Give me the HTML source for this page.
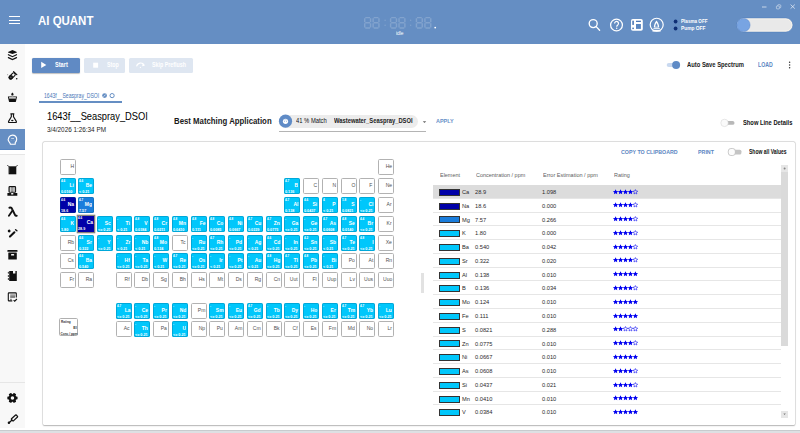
<!DOCTYPE html>
<html><head><meta charset="utf-8">
<style>
html,body{margin:0;padding:0;}
body{width:800px;height:433px;overflow:hidden;position:relative;background:#fff;font-family:"Liberation Sans",sans-serif;}
.a{position:absolute;}
.tx{position:absolute;line-height:1;white-space:nowrap;transform-origin:0 0;}
svg{position:absolute;overflow:visible;}
#hdr{left:0;top:0;width:800px;height:43.5px;background:#658ec3;}
#side{left:0;top:43.5px;width:24.8px;height:384.2px;background:#f8f8f8;}
.hb{position:absolute;left:8.6px;width:11.4px;height:1.3px;background:#fff;}
.btn{position:absolute;top:57.5px;height:15px;border-radius:1.5px;}
.card{left:43px;top:142px;width:752px;height:283px;background:#fff;border-radius:1.5px;box-shadow:0 0 0 0.7px rgba(0,0,0,0.13),0 0.8px 1.6px rgba(0,0,0,0.22);}
.pc{position:absolute;width:16px;height:16px;box-sizing:border-box;border-radius:1.6px;}
.pc.e{background:#fff;border:0.9px solid #b2b2b2;}
.pc.f{border:0.6px solid rgba(0,90,130,0.28);}
.pc.sel{border:none;border-radius:0;box-shadow:0 0 0 1.3px #85857a;}
.pc .s{position:absolute;right:0.9px;top:5.1px;font-size:5.4px;line-height:1;transform:scaleX(0.9);transform-origin:100% 0;}
.pc.e .s{color:#505050;top:4.1px;right:1.1px;font-size:5.6px;}
.pc.f .s{color:#fff;font-weight:bold;font-size:5.5px;top:4.3px;}
.pc .t{position:absolute;left:0.1px;top:1.2px;font-size:3px;line-height:1;color:#fff;font-weight:bold;}
.pc .b{position:absolute;left:0px;top:11.6px;font-size:3.7px;white-space:nowrap;line-height:1;color:#fff;font-weight:bold;}
.tr{position:absolute;left:433.2px;width:348px;height:13.78px;box-sizing:border-box;border-bottom:0.8px solid #e6e6e6;font-size:5.7px;color:#2a2a2a;}
.tr.hl{background:#dcdcdc;}
.tr.last{border-bottom:none;}
.tr .bar{position:absolute;left:5.8px;top:3.9px;width:21px;height:7px;box-sizing:border-box;border:0.7px solid #333;}
.tr span{position:absolute;top:5px;line-height:1;white-space:nowrap;}
.tr .el{left:28.8px;}
.tr .cc{left:41.8px;}
.tr .er{left:108.8px;}
.tr svg{left:179.8px;top:3.6px;}
.seg{position:absolute;background:rgba(255,255,255,0.13);}
</style></head><body>
<div id="hdr" class="a"></div>
<div class="hb" style="top:15.7px"></div><div class="hb" style="top:19.5px"></div><div class="hb" style="top:23.2px"></div>
<svg style="left:0;top:0" width="450" height="44" viewBox="0 0 450 44"><g fill="none" stroke="rgba(255,255,255,0.19)" stroke-width="1.45"><path d="M365.28 17.62 H370.02 M365.28 22.80 H370.02 M365.28 27.97 H370.02 M364.73 18.18 V22.25 M364.73 23.35 V27.42 M370.57 18.18 V22.25 M370.57 23.35 V27.42"/><path d="M373.68 17.62 H378.42 M373.68 22.80 H378.42 M373.68 27.97 H378.42 M373.12 18.18 V22.25 M373.12 23.35 V27.42 M378.97 18.18 V22.25 M378.97 23.35 V27.42"/><path d="M391.18 17.62 H395.92 M391.18 22.80 H395.92 M391.18 27.97 H395.92 M390.62 18.18 V22.25 M390.62 23.35 V27.42 M396.47 18.18 V22.25 M396.47 23.35 V27.42"/><path d="M399.58 17.62 H404.32 M399.58 22.80 H404.32 M399.58 27.97 H404.32 M399.03 18.18 V22.25 M399.03 23.35 V27.42 M404.88 18.18 V22.25 M404.88 23.35 V27.42"/><path d="M416.98 17.62 H421.72 M416.98 22.80 H421.72 M416.98 27.97 H421.72 M416.43 18.18 V22.25 M416.43 23.35 V27.42 M422.27 18.18 V22.25 M422.27 23.35 V27.42"/><path d="M425.48 17.62 H430.22 M425.48 22.80 H430.22 M425.48 27.97 H430.22 M424.93 18.18 V22.25 M424.93 23.35 V27.42 M430.77 18.18 V22.25 M430.77 23.35 V27.42"/></g><g fill="rgba(255,255,255,0.19)"><circle cx="385.1" cy="20.2" r="0.7"/><circle cx="385.1" cy="25.2" r="0.7"/><circle cx="410.7" cy="20.2" r="0.7"/><circle cx="410.7" cy="25.2" r="0.7"/></g><circle cx="435.2" cy="27.6" r="0.9" fill="#fff"/></svg>
<!-- header icons -->
<svg style="left:0;top:0" width="800" height="44" viewBox="0 0 800 44">
 <g fill="none" stroke="#fff" stroke-width="1.35">
  <circle cx="593.2" cy="23.6" r="4"/>
  <line x1="596.2" y1="26.6" x2="599.6" y2="30.2" stroke-linecap="round"/>
  <circle cx="616.5" cy="25" r="5.9" stroke-width="1.25"/>
  <circle cx="656.7" cy="24.75" r="6.5" stroke-width="1.2"/>
 </g>
 <path d="M614.6 23.4 a1.95 1.95 0 1 1 3.2 1.5 c-0.8 0.6 -1.1 0.9 -1.1 1.9" fill="none" stroke="#fff" stroke-width="1.2"/>
 <circle cx="616.7" cy="28.3" r="0.7" fill="#fff"/>
 <rect x="631" y="19" width="11.8" height="11.8" rx="1.8" fill="#fff"/>
 <rect x="632.3" y="20.7" width="1.6" height="4.2" fill="#4c78b6"/>
 <rect x="632.3" y="27.6" width="1.6" height="1.5" fill="#4c78b6"/>
 <rect x="636" y="20.7" width="4.9" height="1.3" fill="#4c78b6"/>
 <rect x="636" y="24" width="4.9" height="4.9" fill="#5a86c0"/>
 <path d="M656.5 20.4 C654.9 22.4 653.8 24.7 653.8 27.6 L659.2 27.6 C659.2 24.7 658.1 22.4 656.5 20.4 Z" fill="#fff"/>
 <path d="M656.5 22.9 C655.8 24 655.2 25.3 655.2 26.7 L657.8 26.7 C657.8 25.3 657.2 24 656.5 22.9 Z" fill="#658ec3"/>
 <line x1="653.4" y1="28.5" x2="659.8" y2="28.5" stroke="#fff" stroke-width="0.8"/>
 <rect x="652.5" y="29.8" width="8.1" height="1.8" fill="#fff"/>
 <circle cx="675.6" cy="21.5" r="1.9" fill="#0e2e74"/>
 <circle cx="675.6" cy="28.5" r="1.9" fill="#0e2e74"/>
 <rect x="736.7" y="18.1" width="56.1" height="13.8" rx="6.9" fill="#e9e9e9" stroke="#4f7cbc" stroke-width="0.7"/>
 <rect x="737.5" y="18.9" width="54.5" height="12.2" rx="6.1" fill="none" stroke="#fbf6ec" stroke-width="0.8"/>
 <circle cx="743.5" cy="25" r="6.6" fill="#78a4e2" stroke="#5a88cc" stroke-width="0.5"/>
 <g stroke="#fff" stroke-width="0.75" fill="none" opacity="0.85">
  <line x1="762" y1="7" x2="766.5" y2="7"/>
  <rect x="776.4" y="6" width="3" height="2.9" rx="0.6" stroke-width="0.55"/>
  <path d="M777.4 5.6 q0.2 -0.9 1.2 -0.9 h1.2 q1 0 1 1 v1.3 q0 0.9 -0.9 1" stroke-width="0.55"/>
  <line x1="790.6" y1="4.6" x2="794.8" y2="8.6"/>
  <line x1="794.8" y1="4.6" x2="790.6" y2="8.6"/>
 </g>
</svg>

<div id="side" class="a"></div>
<div class="a" style="left:0;top:128.9px;width:24.7px;height:21.1px;background:#658ec3;box-shadow:inset 0 -0.8px 0 #5281c0"></div>
<div class="a" style="left:0;top:150px;width:24.8px;height:3.9px;background:#fff"></div>
<div class="a" style="left:0;top:153.9px;width:24.8px;height:0.9px;background:#e6e6e6"></div>
<div class="a" style="left:0;top:382.1px;width:24.8px;height:0.9px;background:#e6e6e6"></div>
<svg style="left:0;top:0" width="25" height="433" viewBox="0 0 25 433">
 <path d="M12.45 50.1 L16.9 51.9 L16.9 52.4 L12.45 54.1 L8 52.4 L8 51.9 Z" fill="#111"/>
 <g fill="none" stroke="#111" stroke-width="1.2" stroke-linecap="round">
  <polyline points="8.4,54.7 12.45,56.7 16.5,54.7"/>
  <polyline points="8.4,57.6 12.45,59.6 16.5,57.6"/>
 </g>
 <g transform="translate(12.3 75.8) rotate(-45)">
  <rect x="-3.9" y="-1.6" width="7.4" height="3.2" rx="1.6" fill="none" stroke="#111" stroke-width="1.1"/>
  <rect x="-4.4" y="-2.1" width="4.6" height="4.2" rx="2" fill="#111"/>
  <circle cx="-2" cy="0" r="0.7" fill="#666"/>
 </g>
 <line x1="13.6" y1="71.6" x2="16.8" y2="74.6" stroke="#111" stroke-width="1.2" stroke-linecap="round"/>
 <circle cx="7.6" cy="74.7" r="0.6" fill="#aaa"/><circle cx="16.7" cy="78.7" r="0.8" fill="#111"/>
 <path d="M12.4 92.4 C12.9 93.1 13.6 93.6 13.6 94.2 A1.2 1.2 0 0 1 11.2 94.2 C11.2 93.6 11.9 93.1 12.4 92.4 Z" fill="#111"/>
 <path d="M8.4 96.7 L9.5 101.4 H15.4 L16.5 96.7" fill="none" stroke="#111" stroke-width="1.1" stroke-linejoin="round"/>
 <path d="M8.4 96.7 Q12.45 95.9 16.5 96.7" fill="none" stroke="#555" stroke-width="0.8"/>
 <rect x="9" y="97.3" width="6.9" height="1.5" fill="#aaa"/>
 <path d="M8.9 98.8 L16 98.8 L15.4 101.8 L9.5 101.8 Z" fill="#111"/>
 <path d="M10.4 113.9 H14.3 M11.3 114 V116.8 L8.6 121.4 Q8.1 122.5 9.3 122.5 H15.6 Q16.8 122.5 16.3 121.4 L13.5 116.8 V114" fill="none" stroke="#111" stroke-width="1.15" stroke-linejoin="round"/>
 <ellipse cx="12.3" cy="120.6" rx="1.2" ry="0.75" fill="#111"/>
 <path d="M12.4 135.1 C14.9 135.1 16.8 136.8 16.7 139.4 C16.6 140.8 16.1 141.7 15.3 142.5 L15.2 144.2 H10.4 L10 143.1 C9.2 142.3 8.5 141.2 8.1 139.9 L8.9 137.3 C9.6 135.9 10.9 135.1 12.4 135.1 Z" fill="none" stroke="#fff" stroke-width="1.15" stroke-linejoin="round"/>
 <line x1="11.2" y1="138.5" x2="14" y2="138.5" stroke="#fff" stroke-width="0.8" opacity="0.75"/>
 <circle cx="11.1" cy="140.4" r="0.4" fill="#fff" opacity="0.4"/><circle cx="14.1" cy="140.4" r="0.4" fill="#fff" opacity="0.4"/>
 <path d="M7.4 165.1 L8.8 166.6 M17.5 165.1 L16.2 166.6" stroke="#111" stroke-width="0.9"/>
 <rect x="8.6" y="166.3" width="7.7" height="8" fill="#111"/>
 <g stroke="#777" stroke-width="0.5"><line x1="8.6" y1="168" x2="10" y2="168"/><line x1="8.6" y1="170" x2="10" y2="170"/><line x1="8.6" y1="172" x2="10" y2="172"/></g>
 <rect x="9" y="186.6" width="6.6" height="5.6" rx="0.8" fill="#999" stroke="#111" stroke-width="1.05"/>
 <line x1="10.6" y1="187.2" x2="10.6" y2="192.2" stroke="#eee" stroke-width="0.7"/><line x1="14" y1="187.2" x2="14" y2="192.2" stroke="#eee" stroke-width="0.7"/>
 <path d="M7.4 192.9 H11.2 V194.4 H13.3 V192.9 H17.3 V195.8 H7.4 Z" fill="#111"/>
 <path d="M9.4 207.7 C10.9 207.3 11.8 208 12.3 209.3 L15.1 215.1 C15.4 215.7 15.9 215.9 16.7 215.7" fill="none" stroke="#111" stroke-width="1.95" stroke-linecap="round"/>
 <line x1="12.4" y1="210.8" x2="8.9" y2="215.8" stroke="#111" stroke-width="1.85" stroke-linecap="round"/>
 <path d="M9.15 229.2 C9.6 229.8 10.6 230.3 10.6 231.1 A1.45 1.45 0 0 1 7.7 231.1 C7.7 230.3 8.7 229.8 9.15 229.2 Z" fill="#111"/>
 <line x1="10" y1="236.6" x2="14.4" y2="232.3" stroke="#111" stroke-width="2.1" stroke-linecap="round"/>
 <line x1="15.6" y1="229.7" x2="16.9" y2="230.8" stroke="#111" stroke-width="1.4" stroke-linecap="round"/>
 <rect x="7.3" y="249.9" width="10.3" height="1.9" rx="0.9" fill="#111"/>
 <rect x="8.3" y="252.5" width="8.5" height="7.1" rx="0.4" fill="#111"/>
 <rect x="11" y="254.1" width="3.2" height="1.5" rx="0.7" fill="#f8f8f8"/>
 <path d="M9.2 270.9 H13 V273.5 H15.4 V270.9 H16.8 V281 H9.2 Z" fill="#111"/>
 <g fill="#444"><circle cx="8.7" cy="272.8" r="1"/><circle cx="8.7" cy="276" r="1"/><circle cx="8.7" cy="279.1" r="1"/></g>
 <path d="M16.3 297.5 V293.6 Q16.3 292.9 15.6 292.9 H9 Q8.3 292.9 8.3 293.6 V300.2 Q8.3 300.9 9 300.9 H12.3" fill="none" stroke="#111" stroke-width="1.1"/>
 <rect x="10.2" y="294.3" width="4.8" height="3" fill="#999"/>
 <line x1="10.2" y1="297.2" x2="15" y2="297.2" stroke="#111" stroke-width="0.6"/>
 <line x1="10.2" y1="299.3" x2="11.7" y2="299.3" stroke="#111" stroke-width="0.8"/>
 <path d="M13.6 300.2 L14.7 301.2 L16.9 299" fill="none" stroke="#111" stroke-width="1.1"/>
 <g transform="translate(12.45 397.95) rotate(90)" fill="#111">
  <circle r="3.7"/>
  <rect x="-1.5" y="-5.1" width="3" height="10.2" rx="0.6"/>
  <rect x="-1.5" y="-5.1" width="3" height="10.2" rx="0.6" transform="rotate(60)"/>
  <rect x="-1.5" y="-5.1" width="3" height="10.2" rx="0.6" transform="rotate(120)"/>
  <circle r="1.75" fill="#f8f8f8"/>
 </g>
 <g transform="translate(14.5 417.9) rotate(-43)">
  <rect x="-3.3" y="-1.4" width="6.6" height="2.8" rx="0.5" fill="none" stroke="#111" stroke-width="1.2"/>
 </g>
 <line x1="8.8" y1="422.9" x2="11.8" y2="420.2" stroke="#111" stroke-width="1.3" stroke-linecap="round"/>
 <circle cx="8.9" cy="422.8" r="1.2" fill="#111"/>
</svg>

<div class="btn" style="left:32px;width:48px;background:#608ac4;box-shadow:0 0.5px 1px rgba(0,0,0,0.25)"></div>
<div class="btn" style="left:83.8px;width:41.2px;background:#dee6f1"></div>
<div class="btn" style="left:129px;width:63.7px;background:#dee6f1"></div>
<svg style="left:0;top:0" width="200" height="80" viewBox="0 0 200 80">
 <path d="M41.2 61.8 L46.3 64.9 L41.2 68 Z" fill="#fff"/>
 <rect x="93.2" y="62.7" width="4.9" height="5" fill="#fff"/>
 <path d="M136.6 66.4 a4.1 4.1 0 0 1 7.6 -1.3" fill="none" stroke="#fff" stroke-width="1.1"/>
 <path d="M142.6 63.6 L145 65.8 L142.2 66.2 Z" fill="#fff"/>
 <circle cx="140.4" cy="67.4" r="0.6" fill="#fff"/>
</svg>

<!-- tab -->
<div class="a" style="left:38.5px;top:101px;width:83.5px;height:1.5px;background:#658ec3"></div>
<svg style="left:0;top:0" width="130" height="110" viewBox="0 0 130 110">
 <circle cx="104.6" cy="95.6" r="2.4" fill="#658ec3"/>
 <path d="M103.6 96.6 l2 -2" stroke="#fff" stroke-width="0.7"/>
 <circle cx="112.1" cy="95.6" r="2.1" fill="none" stroke="#658ec3" stroke-width="1"/>
</svg>

<!-- match pill -->
<div class="a" style="left:279px;top:114.6px;width:139px;height:13.3px;border-radius:6.7px;background:#ececec"></div>
<div class="a" style="left:279px;top:131.1px;width:147px;height:1.2px;background:#b4b4b4"></div>
<svg style="left:0;top:0" width="460" height="140" viewBox="0 0 460 140">
 <circle cx="285.5" cy="121.2" r="6.6" fill="#5f8bc6"/>
 <circle cx="285.5" cy="121.3" r="2.6" fill="#fff"/>
 <path d="M283.6 120.2 Q285.5 119.2 287.4 120.2" stroke="#8fb0dc" stroke-width="0.5" fill="none"/>
 <circle cx="284.6" cy="121.4" r="0.45" fill="#5f8bc6"/><circle cx="286.4" cy="121.4" r="0.45" fill="#5f8bc6"/>
 <path d="M422.8 121.3 h3.4 l-1.7 1.8 z" fill="#666"/>
</svg>

<!-- toggles -->
<svg style="left:0;top:0" width="800" height="160" viewBox="0 0 800 160">
 <rect x="666.7" y="62.9" width="13" height="4.2" rx="2.1" fill="#c9d9f0"/>
 <circle cx="676.1" cy="65" r="4" fill="#5f8bc6"/>
 <g fill="#333"><circle cx="789.6" cy="62.3" r="0.75"/><circle cx="789.6" cy="65" r="0.75"/><circle cx="789.6" cy="67.7" r="0.75"/></g>
 <rect x="721.5" y="121" width="13" height="3.8" rx="1.9" fill="#b8b8b8"/>
 <circle cx="724.5" cy="122.9" r="3.7" fill="#fafafa" stroke="#d0d0d0" stroke-width="0.5"/>
</svg>

<div class="a card"></div>
<svg style="left:0;top:0" width="800" height="160" viewBox="0 0 800 160">
 <rect x="731" y="149.7" width="10.4" height="4.8" rx="1.6" fill="#c4c4c4"/>
 <rect x="728.3" y="148.5" width="7" height="7" rx="2.6" fill="#fcfcfc" stroke="#b5b5b5" stroke-width="0.7"/>
</svg>
<!-- splitter -->
<div class="a" style="left:421.1px;top:273px;width:2.8px;height:20.3px;background:#e2e2e2"></div>
<!-- scrollbar -->
<div class="a" style="left:781.2px;top:165.3px;width:6.8px;height:180.4px;background:#dadada"></div>
<div class="a" style="left:781.2px;top:165.3px;width:6.8px;height:6.6px;background:#e6e6e6"></div>
<div class="a" style="left:781.2px;top:411px;width:6.8px;height:6.8px;background:#e6e6e6"></div>
<svg style="left:0;top:0" width="800" height="433" viewBox="0 0 800 433">
 <circle cx="784.6" cy="168.5" r="1" fill="#888"/>
 <path d="M783.4 413.6 l1.2 1.3 l1.2 -1.3z" fill="#777"/>
</svg>
<!-- legend -->
<div class="a" style="left:59.2px;top:318.2px;width:19px;height:17.8px;box-sizing:border-box;border:0.8px solid #b0b0b0;border-radius:1.6px;background:#fff"></div>
<div class="pc e" style="left:60.00px;top:159.00px"><span class="s">H</span></div>
<div class="pc e" style="left:378.00px;top:159.00px"><span class="s">He</span></div>
<div class="pc f" style="left:60.00px;top:178.00px;background:#00c7fb"><span class="t">4.6</span><span class="s">Li</span><span class="b">0.0160</span></div>
<div class="pc f" style="left:78.00px;top:178.00px;background:#00c7fb"><span class="t">4.6</span><span class="s">Be</span><span class="b">< 0.21</span></div>
<div class="pc f" style="left:284.00px;top:178.00px;background:#00c7fb"><span class="t">4.7</span><span class="s">B</span><span class="b">0.136</span></div>
<div class="pc e" style="left:303.00px;top:178.00px"><span class="s">C</span></div>
<div class="pc e" style="left:322.00px;top:178.00px"><span class="s">N</span></div>
<div class="pc e" style="left:341.00px;top:178.00px"><span class="s">O</span></div>
<div class="pc e" style="left:359.00px;top:178.00px"><span class="s">F</span></div>
<div class="pc e" style="left:378.00px;top:178.00px"><span class="s">Ne</span></div>
<div class="pc f" style="left:60.00px;top:197.00px;background:#0000a8"><span class="t">4.6</span><span class="s">Na</span><span class="b">18.6</span></div>
<div class="pc f" style="left:78.00px;top:197.00px;background:#1a7ddc"><span class="t">4.7</span><span class="s">Mg</span><span class="b">7.57</span></div>
<div class="pc f" style="left:284.00px;top:197.00px;background:#00c7fb"><span class="t">4.7</span><span class="s">Al</span><span class="b">0.138</span></div>
<div class="pc f" style="left:303.00px;top:197.00px;background:#00c7fb"><span class="t">4.6</span><span class="s">Si</span><span class="b">0.0437</span></div>
<div class="pc f" style="left:322.00px;top:197.00px;background:#00c7fb"><span class="t">4</span><span class="s">P</span><span class="b">< 0.21</span></div>
<div class="pc f" style="left:341.00px;top:197.00px;background:#00c7fb"><span class="t">1.8</span><span class="s">S</span><span class="b">0.0821</span></div>
<div class="pc f" style="left:359.00px;top:197.00px;background:#00c7fb"><span class="t">-</span><span class="s">Cl</span><span class="b"><= 0.21</span></div>
<div class="pc e" style="left:378.00px;top:197.00px"><span class="s">Ar</span></div>
<div class="pc f" style="left:60.00px;top:216.00px;background:#00c7fb"><span class="t">4.6</span><span class="s">K</span><span class="b">1.80</span></div>
<div class="pc f sel" style="left:78.00px;top:216.00px;background:#0000a8"><span class="t">4.6</span><span class="s">Ca</span><span class="b">28.9</span></div>
<div class="pc f" style="left:97.00px;top:216.00px;background:#00c7fb"><span class="t">-</span><span class="s">Sc</span><span class="b"><= 0.21</span></div>
<div class="pc f" style="left:116.00px;top:216.00px;background:#00c7fb"><span class="t">-</span><span class="s">Ti</span><span class="b">< 0.21</span></div>
<div class="pc f" style="left:134.00px;top:216.00px;background:#00c7fb"><span class="t">4.8</span><span class="s">V</span><span class="b">0.0384</span></div>
<div class="pc f" style="left:153.00px;top:216.00px;background:#00c7fb"><span class="t">4.8</span><span class="s">Cr</span><span class="b">0.0211</span></div>
<div class="pc f" style="left:172.00px;top:216.00px;background:#00c7fb"><span class="t">4.8</span><span class="s">Mn</span><span class="b">0.0410</span></div>
<div class="pc f" style="left:191.00px;top:216.00px;background:#00c7fb"><span class="t">4.8</span><span class="s">Fe</span><span class="b">0.111</span></div>
<div class="pc f" style="left:209.00px;top:216.00px;background:#00c7fb"><span class="t">4.8</span><span class="s">Co</span><span class="b">0.0085</span></div>
<div class="pc f" style="left:228.00px;top:216.00px;background:#00c7fb"><span class="t">4.8</span><span class="s">Ni</span><span class="b">0.0667</span></div>
<div class="pc f" style="left:247.00px;top:216.00px;background:#00c7fb"><span class="t">4.7</span><span class="s">Cu</span><span class="b">0.0229</span></div>
<div class="pc f" style="left:266.00px;top:216.00px;background:#00c7fb"><span class="t">4.7</span><span class="s">Zn</span><span class="b">0.0775</span></div>
<div class="pc f" style="left:284.00px;top:216.00px;background:#00c7fb"><span class="t">-</span><span class="s">Ga</span><span class="b"><= 0.21</span></div>
<div class="pc f" style="left:303.00px;top:216.00px;background:#00c7fb"><span class="t">-</span><span class="s">Ge</span><span class="b"><= 0.21</span></div>
<div class="pc f" style="left:322.00px;top:216.00px;background:#00c7fb"><span class="t">4.7</span><span class="s">As</span><span class="b">0.0608</span></div>
<div class="pc f" style="left:341.00px;top:216.00px;background:#00c7fb"><span class="t">4.8</span><span class="s">Se</span><span class="b">0.0140</span></div>
<div class="pc f" style="left:359.00px;top:216.00px;background:#00c7fb"><span class="t">4.4</span><span class="s">Br</span><span class="b"><= 0.21</span></div>
<div class="pc e" style="left:378.00px;top:216.00px"><span class="s">Kr</span></div>
<div class="pc e" style="left:60.00px;top:235.00px"><span class="s">Rb</span></div>
<div class="pc f" style="left:78.00px;top:235.00px;background:#00c7fb"><span class="t">4.6</span><span class="s">Sr</span><span class="b">0.322</span></div>
<div class="pc f" style="left:97.00px;top:235.00px;background:#00c7fb"><span class="t">-</span><span class="s">Y</span><span class="b"><= 0.21</span></div>
<div class="pc f" style="left:116.00px;top:235.00px;background:#00c7fb"><span class="t">-</span><span class="s">Zr</span><span class="b">< 0.21</span></div>
<div class="pc f" style="left:134.00px;top:235.00px;background:#00c7fb"><span class="t">-</span><span class="s">Nb</span><span class="b">< 0.21</span></div>
<div class="pc f" style="left:153.00px;top:235.00px;background:#00c7fb"><span class="t">4.8</span><span class="s">Mo</span><span class="b">0.124</span></div>
<div class="pc e" style="left:172.00px;top:235.00px"><span class="s">Tc</span></div>
<div class="pc f" style="left:191.00px;top:235.00px;background:#00c7fb"><span class="t">-</span><span class="s">Ru</span><span class="b"><= 0.21</span></div>
<div class="pc f" style="left:209.00px;top:235.00px;background:#00c7fb"><span class="t">4.7</span><span class="s">Rh</span><span class="b"><= 0.21</span></div>
<div class="pc f" style="left:228.00px;top:235.00px;background:#00c7fb"><span class="t">-</span><span class="s">Pd</span><span class="b"><= 0.21</span></div>
<div class="pc f" style="left:247.00px;top:235.00px;background:#00c7fb"><span class="t">-</span><span class="s">Ag</span><span class="b">< 0.21</span></div>
<div class="pc f" style="left:266.00px;top:235.00px;background:#00c7fb"><span class="t">4.6</span><span class="s">Cd</span><span class="b"><= 0.21</span></div>
<div class="pc f" style="left:284.00px;top:235.00px;background:#00c7fb"><span class="t">-</span><span class="s">In</span><span class="b"><= 0.21</span></div>
<div class="pc f" style="left:303.00px;top:235.00px;background:#00c7fb"><span class="t">4.2</span><span class="s">Sn</span><span class="b"><= 0.21</span></div>
<div class="pc f" style="left:322.00px;top:235.00px;background:#00c7fb"><span class="t">-</span><span class="s">Sb</span><span class="b">< 0.21</span></div>
<div class="pc f" style="left:341.00px;top:235.00px;background:#00c7fb"><span class="t">4.7</span><span class="s">Te</span><span class="b"><= 0.21</span></div>
<div class="pc f" style="left:359.00px;top:235.00px;background:#00c7fb"><span class="t">4.8</span><span class="s">I</span><span class="b"><= 0.21</span></div>
<div class="pc e" style="left:378.00px;top:235.00px"><span class="s">Xe</span></div>
<div class="pc e" style="left:60.00px;top:253.00px"><span class="s">Cs</span></div>
<div class="pc f" style="left:78.00px;top:253.00px;background:#00c7fb"><span class="t">4.6</span><span class="s">Ba</span><span class="b">0.540</span></div>
<div class="pc f" style="left:116.00px;top:253.00px;background:#00c7fb"><span class="t">-</span><span class="s">Hf</span><span class="b"><= 0.21</span></div>
<div class="pc f" style="left:134.00px;top:253.00px;background:#00c7fb"><span class="t">-</span><span class="s">Ta</span><span class="b"><= 0.21</span></div>
<div class="pc f" style="left:153.00px;top:253.00px;background:#00c7fb"><span class="t">-</span><span class="s">W</span><span class="b">< 0.21</span></div>
<div class="pc f" style="left:172.00px;top:253.00px;background:#00c7fb"><span class="t">4.7</span><span class="s">Re</span><span class="b"><= 0.21</span></div>
<div class="pc f" style="left:191.00px;top:253.00px;background:#00c7fb"><span class="t">-</span><span class="s">Os</span><span class="b"><= 0.21</span></div>
<div class="pc f" style="left:209.00px;top:253.00px;background:#00c7fb"><span class="t">-</span><span class="s">Ir</span><span class="b">< 0.21</span></div>
<div class="pc f" style="left:228.00px;top:253.00px;background:#00c7fb"><span class="t">-</span><span class="s">Pt</span><span class="b"><= 0.21</span></div>
<div class="pc f" style="left:247.00px;top:253.00px;background:#00c7fb"><span class="t">-</span><span class="s">Au</span><span class="b">< 0.21</span></div>
<div class="pc f" style="left:266.00px;top:253.00px;background:#00c7fb"><span class="t">4.8</span><span class="s">Hg</span><span class="b"><= 0.21</span></div>
<div class="pc f" style="left:284.00px;top:253.00px;background:#00c7fb"><span class="t">4.7</span><span class="s">Tl</span><span class="b"><= 0.21</span></div>
<div class="pc f" style="left:303.00px;top:253.00px;background:#00c7fb"><span class="t">4.8</span><span class="s">Pb</span><span class="b"><= 0.21</span></div>
<div class="pc f" style="left:322.00px;top:253.00px;background:#00c7fb"><span class="t">-</span><span class="s">Bi</span><span class="b">< 0.21</span></div>
<div class="pc e" style="left:341.00px;top:253.00px"><span class="s">Po</span></div>
<div class="pc e" style="left:359.00px;top:253.00px"><span class="s">At</span></div>
<div class="pc e" style="left:378.00px;top:253.00px"><span class="s">Rn</span></div>
<div class="pc e" style="left:60.00px;top:272.00px"><span class="s">Fr</span></div>
<div class="pc e" style="left:78.00px;top:272.00px"><span class="s">Ra</span></div>
<div class="pc e" style="left:116.00px;top:272.00px"><span class="s">Rf</span></div>
<div class="pc e" style="left:134.00px;top:272.00px"><span class="s">Db</span></div>
<div class="pc e" style="left:153.00px;top:272.00px"><span class="s">Sg</span></div>
<div class="pc e" style="left:172.00px;top:272.00px"><span class="s">Bh</span></div>
<div class="pc e" style="left:191.00px;top:272.00px"><span class="s">Hs</span></div>
<div class="pc e" style="left:209.00px;top:272.00px"><span class="s">Mt</span></div>
<div class="pc e" style="left:228.00px;top:272.00px"><span class="s">Ds</span></div>
<div class="pc e" style="left:247.00px;top:272.00px"><span class="s">Rg</span></div>
<div class="pc e" style="left:266.00px;top:272.00px"><span class="s">Cn</span></div>
<div class="pc e" style="left:284.00px;top:272.00px"><span class="s">Uut</span></div>
<div class="pc e" style="left:303.00px;top:272.00px"><span class="s">Fl</span></div>
<div class="pc e" style="left:322.00px;top:272.00px"><span class="s">Uup</span></div>
<div class="pc e" style="left:341.00px;top:272.00px"><span class="s">Lv</span></div>
<div class="pc e" style="left:359.00px;top:272.00px"><span class="s">Uus</span></div>
<div class="pc e" style="left:378.00px;top:272.00px"><span class="s">Uuo</span></div>
<div class="pc f" style="left:116.00px;top:303.00px;background:#00c7fb"><span class="t">4.7</span><span class="s">La</span><span class="b"><= 0.21</span></div>
<div class="pc f" style="left:134.00px;top:303.00px;background:#00c7fb"><span class="t">-</span><span class="s">Ce</span><span class="b"><= 0.21</span></div>
<div class="pc f" style="left:153.00px;top:303.00px;background:#00c7fb"><span class="t">-</span><span class="s">Pr</span><span class="b"><= 0.21</span></div>
<div class="pc f" style="left:172.00px;top:303.00px;background:#00c7fb"><span class="t">-</span><span class="s">Nd</span><span class="b"><= 0.21</span></div>
<div class="pc e" style="left:191.00px;top:303.00px"><span class="s">Pm</span></div>
<div class="pc f" style="left:209.00px;top:303.00px;background:#00c7fb"><span class="t">-</span><span class="s">Sm</span><span class="b"><= 0.21</span></div>
<div class="pc f" style="left:228.00px;top:303.00px;background:#00c7fb"><span class="t">-</span><span class="s">Eu</span><span class="b"><= 0.21</span></div>
<div class="pc f" style="left:247.00px;top:303.00px;background:#00c7fb"><span class="t">4.7</span><span class="s">Gd</span><span class="b"><= 0.21</span></div>
<div class="pc f" style="left:266.00px;top:303.00px;background:#00c7fb"><span class="t">-</span><span class="s">Tb</span><span class="b"><= 0.21</span></div>
<div class="pc f" style="left:284.00px;top:303.00px;background:#00c7fb"><span class="t">-</span><span class="s">Dy</span><span class="b"><= 0.21</span></div>
<div class="pc f" style="left:303.00px;top:303.00px;background:#00c7fb"><span class="t">-</span><span class="s">Ho</span><span class="b"><= 0.21</span></div>
<div class="pc f" style="left:322.00px;top:303.00px;background:#00c7fb"><span class="t">-</span><span class="s">Er</span><span class="b"><= 0.21</span></div>
<div class="pc f" style="left:341.00px;top:303.00px;background:#00c7fb"><span class="t">4.7</span><span class="s">Tm</span><span class="b"><= 0.21</span></div>
<div class="pc f" style="left:359.00px;top:303.00px;background:#00c7fb"><span class="t">4.7</span><span class="s">Yb</span><span class="b"><= 0.21</span></div>
<div class="pc f" style="left:378.00px;top:303.00px;background:#00c7fb"><span class="t">-</span><span class="s">Lu</span><span class="b"><= 0.21</span></div>
<div class="pc e" style="left:116.00px;top:321.00px"><span class="s">Ac</span></div>
<div class="pc f" style="left:134.00px;top:321.00px;background:#00c7fb"><span class="t">-</span><span class="s">Th</span><span class="b"><= 0.21</span></div>
<div class="pc e" style="left:153.00px;top:321.00px"><span class="s">Pa</span></div>
<div class="pc f" style="left:172.00px;top:321.00px;background:#00c7fb"><span class="t">-</span><span class="s">U</span><span class="b"><= 0.21</span></div>
<div class="pc e" style="left:191.00px;top:321.00px"><span class="s">Np</span></div>
<div class="pc e" style="left:209.00px;top:321.00px"><span class="s">Pu</span></div>
<div class="pc e" style="left:228.00px;top:321.00px"><span class="s">Am</span></div>
<div class="pc e" style="left:247.00px;top:321.00px"><span class="s">Cm</span></div>
<div class="pc e" style="left:266.00px;top:321.00px"><span class="s">Bk</span></div>
<div class="pc e" style="left:284.00px;top:321.00px"><span class="s">Cf</span></div>
<div class="pc e" style="left:303.00px;top:321.00px"><span class="s">Es</span></div>
<div class="pc e" style="left:322.00px;top:321.00px"><span class="s">Fm</span></div>
<div class="pc e" style="left:341.00px;top:321.00px"><span class="s">Md</span></div>
<div class="pc e" style="left:359.00px;top:321.00px"><span class="s">No</span></div>
<div class="pc e" style="left:378.00px;top:321.00px"><span class="s">Lr</span></div>
<div class="tr hl" style="top:185.00px"><i class="bar" style="background:#0000a8"></i><span class="el">Ca</span><span class="cc">28.9</span><span class="er">1.098</span><svg width="26" height="6" viewBox="0 0 26 6"><path d="M2.60,0.20 L3.39,1.91 L5.26,2.13 L3.88,3.42 L4.25,5.27 L2.60,4.35 L0.95,5.27 L1.32,3.42 L-0.06,2.13 L1.81,1.91ZM7.55,0.20 L8.34,1.91 L10.21,2.13 L8.83,3.42 L9.20,5.27 L7.55,4.35 L5.90,5.27 L6.27,3.42 L4.89,2.13 L6.76,1.91ZM12.50,0.20 L13.29,1.91 L15.16,2.13 L13.78,3.42 L14.15,5.27 L12.50,4.35 L10.85,5.27 L11.22,3.42 L9.84,2.13 L11.71,1.91ZM17.45,0.20 L18.24,1.91 L20.11,2.13 L18.73,3.42 L19.10,5.27 L17.45,4.35 L15.80,5.27 L16.17,3.42 L14.79,2.13 L16.66,1.91Z" fill="#0000f0"/><path d="M22.40,0.55 L23.08,2.07 L24.73,2.24 L23.49,3.36 L23.84,4.98 L22.40,4.15 L20.96,4.98 L21.31,3.36 L20.07,2.24 L21.72,2.07Z" fill="none" stroke="#0000f0" stroke-width="0.55"/></svg></div>
<div class="tr" style="top:198.78px"><i class="bar" style="background:#0000a8"></i><span class="el">Na</span><span class="cc">18.6</span><span class="er">0.000</span><svg width="26" height="6" viewBox="0 0 26 6"><path d="M2.60,0.20 L3.39,1.91 L5.26,2.13 L3.88,3.42 L4.25,5.27 L2.60,4.35 L0.95,5.27 L1.32,3.42 L-0.06,2.13 L1.81,1.91ZM7.55,0.20 L8.34,1.91 L10.21,2.13 L8.83,3.42 L9.20,5.27 L7.55,4.35 L5.90,5.27 L6.27,3.42 L4.89,2.13 L6.76,1.91ZM12.50,0.20 L13.29,1.91 L15.16,2.13 L13.78,3.42 L14.15,5.27 L12.50,4.35 L10.85,5.27 L11.22,3.42 L9.84,2.13 L11.71,1.91ZM17.45,0.20 L18.24,1.91 L20.11,2.13 L18.73,3.42 L19.10,5.27 L17.45,4.35 L15.80,5.27 L16.17,3.42 L14.79,2.13 L16.66,1.91Z" fill="#0000f0"/><path d="M22.40,0.55 L23.08,2.07 L24.73,2.24 L23.49,3.36 L23.84,4.98 L22.40,4.15 L20.96,4.98 L21.31,3.36 L20.07,2.24 L21.72,2.07Z" fill="none" stroke="#0000f0" stroke-width="0.55"/></svg></div>
<div class="tr" style="top:212.56px"><i class="bar" style="background:#1a7ddc"></i><span class="el">Mg</span><span class="cc">7.57</span><span class="er">0.266</span><svg width="26" height="6" viewBox="0 0 26 6"><path d="M2.60,0.20 L3.39,1.91 L5.26,2.13 L3.88,3.42 L4.25,5.27 L2.60,4.35 L0.95,5.27 L1.32,3.42 L-0.06,2.13 L1.81,1.91ZM7.55,0.20 L8.34,1.91 L10.21,2.13 L8.83,3.42 L9.20,5.27 L7.55,4.35 L5.90,5.27 L6.27,3.42 L4.89,2.13 L6.76,1.91ZM12.50,0.20 L13.29,1.91 L15.16,2.13 L13.78,3.42 L14.15,5.27 L12.50,4.35 L10.85,5.27 L11.22,3.42 L9.84,2.13 L11.71,1.91ZM17.45,0.20 L18.24,1.91 L20.11,2.13 L18.73,3.42 L19.10,5.27 L17.45,4.35 L15.80,5.27 L16.17,3.42 L14.79,2.13 L16.66,1.91Z" fill="#0000f0"/><path d="M22.40,0.55 L23.08,2.07 L24.73,2.24 L23.49,3.36 L23.84,4.98 L22.40,4.15 L20.96,4.98 L21.31,3.36 L20.07,2.24 L21.72,2.07Z" fill="none" stroke="#0000f0" stroke-width="0.55"/></svg></div>
<div class="tr" style="top:226.34px"><i class="bar" style="background:#00c7fb"></i><span class="el">K</span><span class="cc">1.80</span><span class="er">0.000</span><svg width="26" height="6" viewBox="0 0 26 6"><path d="M2.60,0.20 L3.39,1.91 L5.26,2.13 L3.88,3.42 L4.25,5.27 L2.60,4.35 L0.95,5.27 L1.32,3.42 L-0.06,2.13 L1.81,1.91ZM7.55,0.20 L8.34,1.91 L10.21,2.13 L8.83,3.42 L9.20,5.27 L7.55,4.35 L5.90,5.27 L6.27,3.42 L4.89,2.13 L6.76,1.91ZM12.50,0.20 L13.29,1.91 L15.16,2.13 L13.78,3.42 L14.15,5.27 L12.50,4.35 L10.85,5.27 L11.22,3.42 L9.84,2.13 L11.71,1.91ZM17.45,0.20 L18.24,1.91 L20.11,2.13 L18.73,3.42 L19.10,5.27 L17.45,4.35 L15.80,5.27 L16.17,3.42 L14.79,2.13 L16.66,1.91Z" fill="#0000f0"/><path d="M22.40,0.55 L23.08,2.07 L24.73,2.24 L23.49,3.36 L23.84,4.98 L22.40,4.15 L20.96,4.98 L21.31,3.36 L20.07,2.24 L21.72,2.07Z" fill="none" stroke="#0000f0" stroke-width="0.55"/></svg></div>
<div class="tr" style="top:240.12px"><i class="bar" style="background:#00c7fb"></i><span class="el">Ba</span><span class="cc">0.540</span><span class="er">0.042</span><svg width="26" height="6" viewBox="0 0 26 6"><path d="M2.60,0.20 L3.39,1.91 L5.26,2.13 L3.88,3.42 L4.25,5.27 L2.60,4.35 L0.95,5.27 L1.32,3.42 L-0.06,2.13 L1.81,1.91ZM7.55,0.20 L8.34,1.91 L10.21,2.13 L8.83,3.42 L9.20,5.27 L7.55,4.35 L5.90,5.27 L6.27,3.42 L4.89,2.13 L6.76,1.91ZM12.50,0.20 L13.29,1.91 L15.16,2.13 L13.78,3.42 L14.15,5.27 L12.50,4.35 L10.85,5.27 L11.22,3.42 L9.84,2.13 L11.71,1.91ZM17.45,0.20 L18.24,1.91 L20.11,2.13 L18.73,3.42 L19.10,5.27 L17.45,4.35 L15.80,5.27 L16.17,3.42 L14.79,2.13 L16.66,1.91Z" fill="#0000f0"/><path d="M22.40,0.55 L23.08,2.07 L24.73,2.24 L23.49,3.36 L23.84,4.98 L22.40,4.15 L20.96,4.98 L21.31,3.36 L20.07,2.24 L21.72,2.07Z" fill="none" stroke="#0000f0" stroke-width="0.55"/></svg></div>
<div class="tr" style="top:253.90px"><i class="bar" style="background:#00c7fb"></i><span class="el">Sr</span><span class="cc">0.322</span><span class="er">0.020</span><svg width="26" height="6" viewBox="0 0 26 6"><path d="M2.60,0.20 L3.39,1.91 L5.26,2.13 L3.88,3.42 L4.25,5.27 L2.60,4.35 L0.95,5.27 L1.32,3.42 L-0.06,2.13 L1.81,1.91ZM7.55,0.20 L8.34,1.91 L10.21,2.13 L8.83,3.42 L9.20,5.27 L7.55,4.35 L5.90,5.27 L6.27,3.42 L4.89,2.13 L6.76,1.91ZM12.50,0.20 L13.29,1.91 L15.16,2.13 L13.78,3.42 L14.15,5.27 L12.50,4.35 L10.85,5.27 L11.22,3.42 L9.84,2.13 L11.71,1.91ZM17.45,0.20 L18.24,1.91 L20.11,2.13 L18.73,3.42 L19.10,5.27 L17.45,4.35 L15.80,5.27 L16.17,3.42 L14.79,2.13 L16.66,1.91Z" fill="#0000f0"/><path d="M22.40,0.55 L23.08,2.07 L24.73,2.24 L23.49,3.36 L23.84,4.98 L22.40,4.15 L20.96,4.98 L21.31,3.36 L20.07,2.24 L21.72,2.07Z" fill="none" stroke="#0000f0" stroke-width="0.55"/></svg></div>
<div class="tr" style="top:267.68px"><i class="bar" style="background:#00c7fb"></i><span class="el">Al</span><span class="cc">0.138</span><span class="er">0.010</span><svg width="26" height="6" viewBox="0 0 26 6"><path d="M2.60,0.20 L3.39,1.91 L5.26,2.13 L3.88,3.42 L4.25,5.27 L2.60,4.35 L0.95,5.27 L1.32,3.42 L-0.06,2.13 L1.81,1.91ZM7.55,0.20 L8.34,1.91 L10.21,2.13 L8.83,3.42 L9.20,5.27 L7.55,4.35 L5.90,5.27 L6.27,3.42 L4.89,2.13 L6.76,1.91ZM12.50,0.20 L13.29,1.91 L15.16,2.13 L13.78,3.42 L14.15,5.27 L12.50,4.35 L10.85,5.27 L11.22,3.42 L9.84,2.13 L11.71,1.91ZM17.45,0.20 L18.24,1.91 L20.11,2.13 L18.73,3.42 L19.10,5.27 L17.45,4.35 L15.80,5.27 L16.17,3.42 L14.79,2.13 L16.66,1.91ZM22.40,0.20 L23.19,1.91 L25.06,2.13 L23.68,3.42 L24.05,5.27 L22.40,4.35 L20.75,5.27 L21.12,3.42 L19.74,2.13 L21.61,1.91Z" fill="#0000f0"/></svg></div>
<div class="tr" style="top:281.46px"><i class="bar" style="background:#00c7fb"></i><span class="el">B</span><span class="cc">0.136</span><span class="er">0.034</span><svg width="26" height="6" viewBox="0 0 26 6"><path d="M2.60,0.20 L3.39,1.91 L5.26,2.13 L3.88,3.42 L4.25,5.27 L2.60,4.35 L0.95,5.27 L1.32,3.42 L-0.06,2.13 L1.81,1.91ZM7.55,0.20 L8.34,1.91 L10.21,2.13 L8.83,3.42 L9.20,5.27 L7.55,4.35 L5.90,5.27 L6.27,3.42 L4.89,2.13 L6.76,1.91ZM12.50,0.20 L13.29,1.91 L15.16,2.13 L13.78,3.42 L14.15,5.27 L12.50,4.35 L10.85,5.27 L11.22,3.42 L9.84,2.13 L11.71,1.91ZM17.45,0.20 L18.24,1.91 L20.11,2.13 L18.73,3.42 L19.10,5.27 L17.45,4.35 L15.80,5.27 L16.17,3.42 L14.79,2.13 L16.66,1.91Z" fill="#0000f0"/><path d="M22.40,0.55 L23.08,2.07 L24.73,2.24 L23.49,3.36 L23.84,4.98 L22.40,4.15 L20.96,4.98 L21.31,3.36 L20.07,2.24 L21.72,2.07Z" fill="none" stroke="#0000f0" stroke-width="0.55"/></svg></div>
<div class="tr" style="top:295.24px"><i class="bar" style="background:#00c7fb"></i><span class="el">Mo</span><span class="cc">0.124</span><span class="er">0.010</span><svg width="26" height="6" viewBox="0 0 26 6"><path d="M2.60,0.20 L3.39,1.91 L5.26,2.13 L3.88,3.42 L4.25,5.27 L2.60,4.35 L0.95,5.27 L1.32,3.42 L-0.06,2.13 L1.81,1.91ZM7.55,0.20 L8.34,1.91 L10.21,2.13 L8.83,3.42 L9.20,5.27 L7.55,4.35 L5.90,5.27 L6.27,3.42 L4.89,2.13 L6.76,1.91ZM12.50,0.20 L13.29,1.91 L15.16,2.13 L13.78,3.42 L14.15,5.27 L12.50,4.35 L10.85,5.27 L11.22,3.42 L9.84,2.13 L11.71,1.91ZM17.45,0.20 L18.24,1.91 L20.11,2.13 L18.73,3.42 L19.10,5.27 L17.45,4.35 L15.80,5.27 L16.17,3.42 L14.79,2.13 L16.66,1.91ZM22.40,0.20 L23.19,1.91 L25.06,2.13 L23.68,3.42 L24.05,5.27 L22.40,4.35 L20.75,5.27 L21.12,3.42 L19.74,2.13 L21.61,1.91Z" fill="#0000f0"/></svg></div>
<div class="tr" style="top:309.02px"><i class="bar" style="background:#00c7fb"></i><span class="el">Fe</span><span class="cc">0.111</span><span class="er">0.010</span><svg width="26" height="6" viewBox="0 0 26 6"><path d="M2.60,0.20 L3.39,1.91 L5.26,2.13 L3.88,3.42 L4.25,5.27 L2.60,4.35 L0.95,5.27 L1.32,3.42 L-0.06,2.13 L1.81,1.91ZM7.55,0.20 L8.34,1.91 L10.21,2.13 L8.83,3.42 L9.20,5.27 L7.55,4.35 L5.90,5.27 L6.27,3.42 L4.89,2.13 L6.76,1.91ZM12.50,0.20 L13.29,1.91 L15.16,2.13 L13.78,3.42 L14.15,5.27 L12.50,4.35 L10.85,5.27 L11.22,3.42 L9.84,2.13 L11.71,1.91ZM17.45,0.20 L18.24,1.91 L20.11,2.13 L18.73,3.42 L19.10,5.27 L17.45,4.35 L15.80,5.27 L16.17,3.42 L14.79,2.13 L16.66,1.91ZM22.40,0.20 L23.19,1.91 L25.06,2.13 L23.68,3.42 L24.05,5.27 L22.40,4.35 L20.75,5.27 L21.12,3.42 L19.74,2.13 L21.61,1.91Z" fill="#0000f0"/></svg></div>
<div class="tr" style="top:322.80px"><i class="bar" style="background:#00c7fb"></i><span class="el">S</span><span class="cc">0.0821</span><span class="er">0.288</span><svg width="26" height="6" viewBox="0 0 26 6"><path d="M2.60,0.20 L3.39,1.91 L5.26,2.13 L3.88,3.42 L4.25,5.27 L2.60,4.35 L0.95,5.27 L1.32,3.42 L-0.06,2.13 L1.81,1.91ZM7.55,0.20 L8.34,1.91 L10.21,2.13 L8.83,3.42 L9.20,5.27 L7.55,4.35 L5.90,5.27 L6.27,3.42 L4.89,2.13 L6.76,1.91Z" fill="#0000f0"/><path d="M12.50,0.55 L13.18,2.07 L14.83,2.24 L13.59,3.36 L13.94,4.98 L12.50,4.15 L11.06,4.98 L11.41,3.36 L10.17,2.24 L11.82,2.07ZM17.45,0.55 L18.13,2.07 L19.78,2.24 L18.54,3.36 L18.89,4.98 L17.45,4.15 L16.01,4.98 L16.36,3.36 L15.12,2.24 L16.77,2.07ZM22.40,0.55 L23.08,2.07 L24.73,2.24 L23.49,3.36 L23.84,4.98 L22.40,4.15 L20.96,4.98 L21.31,3.36 L20.07,2.24 L21.72,2.07Z" fill="none" stroke="#0000f0" stroke-width="0.55"/></svg></div>
<div class="tr" style="top:336.58px"><i class="bar" style="background:#00c7fb"></i><span class="el">Zn</span><span class="cc">0.0775</span><span class="er">0.010</span><svg width="26" height="6" viewBox="0 0 26 6"><path d="M2.60,0.20 L3.39,1.91 L5.26,2.13 L3.88,3.42 L4.25,5.27 L2.60,4.35 L0.95,5.27 L1.32,3.42 L-0.06,2.13 L1.81,1.91ZM7.55,0.20 L8.34,1.91 L10.21,2.13 L8.83,3.42 L9.20,5.27 L7.55,4.35 L5.90,5.27 L6.27,3.42 L4.89,2.13 L6.76,1.91ZM12.50,0.20 L13.29,1.91 L15.16,2.13 L13.78,3.42 L14.15,5.27 L12.50,4.35 L10.85,5.27 L11.22,3.42 L9.84,2.13 L11.71,1.91ZM17.45,0.20 L18.24,1.91 L20.11,2.13 L18.73,3.42 L19.10,5.27 L17.45,4.35 L15.80,5.27 L16.17,3.42 L14.79,2.13 L16.66,1.91Z" fill="#0000f0"/><path d="M22.40,0.55 L23.08,2.07 L24.73,2.24 L23.49,3.36 L23.84,4.98 L22.40,4.15 L20.96,4.98 L21.31,3.36 L20.07,2.24 L21.72,2.07Z" fill="none" stroke="#0000f0" stroke-width="0.55"/></svg></div>
<div class="tr" style="top:350.36px"><i class="bar" style="background:#00c7fb"></i><span class="el">Ni</span><span class="cc">0.0667</span><span class="er">0.010</span><svg width="26" height="6" viewBox="0 0 26 6"><path d="M2.60,0.20 L3.39,1.91 L5.26,2.13 L3.88,3.42 L4.25,5.27 L2.60,4.35 L0.95,5.27 L1.32,3.42 L-0.06,2.13 L1.81,1.91ZM7.55,0.20 L8.34,1.91 L10.21,2.13 L8.83,3.42 L9.20,5.27 L7.55,4.35 L5.90,5.27 L6.27,3.42 L4.89,2.13 L6.76,1.91ZM12.50,0.20 L13.29,1.91 L15.16,2.13 L13.78,3.42 L14.15,5.27 L12.50,4.35 L10.85,5.27 L11.22,3.42 L9.84,2.13 L11.71,1.91ZM17.45,0.20 L18.24,1.91 L20.11,2.13 L18.73,3.42 L19.10,5.27 L17.45,4.35 L15.80,5.27 L16.17,3.42 L14.79,2.13 L16.66,1.91ZM22.40,0.20 L23.19,1.91 L25.06,2.13 L23.68,3.42 L24.05,5.27 L22.40,4.35 L20.75,5.27 L21.12,3.42 L19.74,2.13 L21.61,1.91Z" fill="#0000f0"/></svg></div>
<div class="tr" style="top:364.14px"><i class="bar" style="background:#00c7fb"></i><span class="el">As</span><span class="cc">0.0608</span><span class="er">0.010</span><svg width="26" height="6" viewBox="0 0 26 6"><path d="M2.60,0.20 L3.39,1.91 L5.26,2.13 L3.88,3.42 L4.25,5.27 L2.60,4.35 L0.95,5.27 L1.32,3.42 L-0.06,2.13 L1.81,1.91ZM7.55,0.20 L8.34,1.91 L10.21,2.13 L8.83,3.42 L9.20,5.27 L7.55,4.35 L5.90,5.27 L6.27,3.42 L4.89,2.13 L6.76,1.91ZM12.50,0.20 L13.29,1.91 L15.16,2.13 L13.78,3.42 L14.15,5.27 L12.50,4.35 L10.85,5.27 L11.22,3.42 L9.84,2.13 L11.71,1.91ZM17.45,0.20 L18.24,1.91 L20.11,2.13 L18.73,3.42 L19.10,5.27 L17.45,4.35 L15.80,5.27 L16.17,3.42 L14.79,2.13 L16.66,1.91Z" fill="#0000f0"/><path d="M22.40,0.55 L23.08,2.07 L24.73,2.24 L23.49,3.36 L23.84,4.98 L22.40,4.15 L20.96,4.98 L21.31,3.36 L20.07,2.24 L21.72,2.07Z" fill="none" stroke="#0000f0" stroke-width="0.55"/></svg></div>
<div class="tr" style="top:377.92px"><i class="bar" style="background:#00c7fb"></i><span class="el">Si</span><span class="cc">0.0437</span><span class="er">0.021</span><svg width="26" height="6" viewBox="0 0 26 6"><path d="M2.60,0.20 L3.39,1.91 L5.26,2.13 L3.88,3.42 L4.25,5.27 L2.60,4.35 L0.95,5.27 L1.32,3.42 L-0.06,2.13 L1.81,1.91ZM7.55,0.20 L8.34,1.91 L10.21,2.13 L8.83,3.42 L9.20,5.27 L7.55,4.35 L5.90,5.27 L6.27,3.42 L4.89,2.13 L6.76,1.91ZM12.50,0.20 L13.29,1.91 L15.16,2.13 L13.78,3.42 L14.15,5.27 L12.50,4.35 L10.85,5.27 L11.22,3.42 L9.84,2.13 L11.71,1.91ZM17.45,0.20 L18.24,1.91 L20.11,2.13 L18.73,3.42 L19.10,5.27 L17.45,4.35 L15.80,5.27 L16.17,3.42 L14.79,2.13 L16.66,1.91Z" fill="#0000f0"/><path d="M22.40,0.55 L23.08,2.07 L24.73,2.24 L23.49,3.36 L23.84,4.98 L22.40,4.15 L20.96,4.98 L21.31,3.36 L20.07,2.24 L21.72,2.07Z" fill="none" stroke="#0000f0" stroke-width="0.55"/></svg></div>
<div class="tr" style="top:391.70px"><i class="bar" style="background:#00c7fb"></i><span class="el">Mn</span><span class="cc">0.0410</span><span class="er">0.010</span><svg width="26" height="6" viewBox="0 0 26 6"><path d="M2.60,0.20 L3.39,1.91 L5.26,2.13 L3.88,3.42 L4.25,5.27 L2.60,4.35 L0.95,5.27 L1.32,3.42 L-0.06,2.13 L1.81,1.91ZM7.55,0.20 L8.34,1.91 L10.21,2.13 L8.83,3.42 L9.20,5.27 L7.55,4.35 L5.90,5.27 L6.27,3.42 L4.89,2.13 L6.76,1.91ZM12.50,0.20 L13.29,1.91 L15.16,2.13 L13.78,3.42 L14.15,5.27 L12.50,4.35 L10.85,5.27 L11.22,3.42 L9.84,2.13 L11.71,1.91ZM17.45,0.20 L18.24,1.91 L20.11,2.13 L18.73,3.42 L19.10,5.27 L17.45,4.35 L15.80,5.27 L16.17,3.42 L14.79,2.13 L16.66,1.91ZM22.40,0.20 L23.19,1.91 L25.06,2.13 L23.68,3.42 L24.05,5.27 L22.40,4.35 L20.75,5.27 L21.12,3.42 L19.74,2.13 L21.61,1.91Z" fill="#0000f0"/></svg></div>
<div class="tr last" style="top:405.48px"><i class="bar" style="background:#00c7fb"></i><span class="el">V</span><span class="cc">0.0384</span><span class="er">0.010</span><svg width="26" height="6" viewBox="0 0 26 6"><path d="M2.60,0.20 L3.39,1.91 L5.26,2.13 L3.88,3.42 L4.25,5.27 L2.60,4.35 L0.95,5.27 L1.32,3.42 L-0.06,2.13 L1.81,1.91ZM7.55,0.20 L8.34,1.91 L10.21,2.13 L8.83,3.42 L9.20,5.27 L7.55,4.35 L5.90,5.27 L6.27,3.42 L4.89,2.13 L6.76,1.91ZM12.50,0.20 L13.29,1.91 L15.16,2.13 L13.78,3.42 L14.15,5.27 L12.50,4.35 L10.85,5.27 L11.22,3.42 L9.84,2.13 L11.71,1.91ZM17.45,0.20 L18.24,1.91 L20.11,2.13 L18.73,3.42 L19.10,5.27 L17.45,4.35 L15.80,5.27 L16.17,3.42 L14.79,2.13 L16.66,1.91ZM22.40,0.20 L23.19,1.91 L25.06,2.13 L23.68,3.42 L24.05,5.27 L22.40,4.35 L20.75,5.27 L21.12,3.42 L19.74,2.13 L21.61,1.91Z" fill="#0000f0"/></svg></div>
<div class="tx" style="left:37.50px;top:14.80px;font-size:12.41px;font-weight:bold;color:#fff;transform:scaleX(0.924);">AI QUANT</div>
<div class="tx" style="left:54.75px;top:61.03px;font-size:7.05px;font-weight:bold;color:#fff;transform:scaleX(0.794);">Start</div>
<div class="tx" style="left:107.00px;top:61.03px;font-size:7.05px;font-weight:bold;color:#fff;transform:scaleX(0.747);">Stop</div>
<div class="tx" style="left:152.00px;top:61.03px;font-size:7.05px;font-weight:bold;color:#fff;transform:scaleX(0.755);">Skip Preflush</div>
<div class="tx" style="left:43.75px;top:93.29px;font-size:6.40px;color:#4a78b8;transform:scaleX(0.797);">1643f__Seaspray_DSOI</div>
<div class="tx" style="left:47.20px;top:112.29px;font-size:10.17px;color:#000;transform:scaleX(0.916);">1643f__Seaspray_DSOI</div>
<div class="tx" style="left:47.00px;top:125.63px;font-size:7.41px;color:#222;transform:scaleX(0.857);">3/4/2026 1:26:34 PM</div>
<div class="tx" style="left:173.75px;top:117.51px;font-size:8.14px;font-weight:bold;color:#1a1a1a;transform:scaleX(0.960);">Best Matching Application</div>
<div class="tx" style="left:296.00px;top:118.41px;font-size:6.84px;color:#111;transform:scaleX(0.853);">41 % Match</div>
<div class="tx" style="left:333.75px;top:118.41px;font-size:6.84px;font-weight:bold;color:#222;transform:scaleX(0.851);">Wastewater_Seaspray_DSOI</div>
<div class="tx" style="left:436.00px;top:119.27px;font-size:5.94px;font-weight:bold;color:#6890c8;transform:scaleX(0.922);">APPLY</div>
<div class="tx" style="left:686.60px;top:61.87px;font-size:7.12px;font-weight:bold;color:#222;transform:scaleX(0.820);">Auto Save Spectrum</div>
<div class="tx" style="left:757.70px;top:62.17px;font-size:6.77px;font-weight:bold;color:#5b86c2;transform:scaleX(0.767);">LOAD</div>
<div class="tx" style="left:742.60px;top:119.87px;font-size:7.12px;font-weight:bold;color:#111;transform:scaleX(0.811);">Show Line Details</div>
<div class="tx" style="left:621.25px;top:148.64px;font-size:6.21px;font-weight:bold;color:#5b86c2;transform:scaleX(0.855);">COPY TO CLIPBOARD</div>
<div class="tx" style="left:698.00px;top:148.64px;font-size:6.21px;font-weight:bold;color:#5b86c2;transform:scaleX(0.858);">PRINT</div>
<div class="tx" style="left:749.40px;top:149.04px;font-size:6.69px;font-weight:bold;color:#111;transform:scaleX(0.750);">Show all Values</div>
<div class="tx" style="left:440.00px;top:173.03px;font-size:5.64px;color:#606060;transform:scaleX(0.967);">Element</div>
<div class="tx" style="left:476.25px;top:173.03px;font-size:5.64px;color:#606060;transform:scaleX(0.972);">Concentration / ppm</div>
<div class="tx" style="left:542.75px;top:173.03px;font-size:5.64px;color:#606060;transform:scaleX(0.981);">Error Estimation / ppm</div>
<div class="tx" style="left:614.00px;top:173.03px;font-size:5.64px;color:#606060;transform:scaleX(0.963);">Rating</div>
<div class="tx" style="left:681.00px;top:19.46px;font-size:5.36px;font-weight:bold;color:#fff;transform:scaleX(0.856);">Plasma OFF</div>
<div class="tx" style="left:681.00px;top:26.46px;font-size:5.36px;font-weight:bold;color:#fff;transform:scaleX(0.905);">Pump OFF</div>
<div class="tx" style="left:396.00px;top:31.78px;font-size:4.51px;color:#fff;transform:scaleX(1.082);">idle</div>
<div class="tx" style="left:61.1px;top:321.3px;font-size:3.1px;color:#333;font-weight:bold">Rating</div>
<div class="tx" style="left:73.2px;top:326.5px;font-size:3.8px;color:#333;font-weight:bold">El</div>
<div class="tx" style="left:60.6px;top:333.1px;font-size:3.1px;color:#333;font-weight:bold">Conc / ppm</div>
<!-- bottom strip -->
<div class="a" style="left:0;top:429.6px;width:800px;height:1.2px;background:#c8cbce"></div>
<div class="a" style="left:0;top:430.8px;width:800px;height:2.2px;background:#dde0e3"></div>
</body></html>
